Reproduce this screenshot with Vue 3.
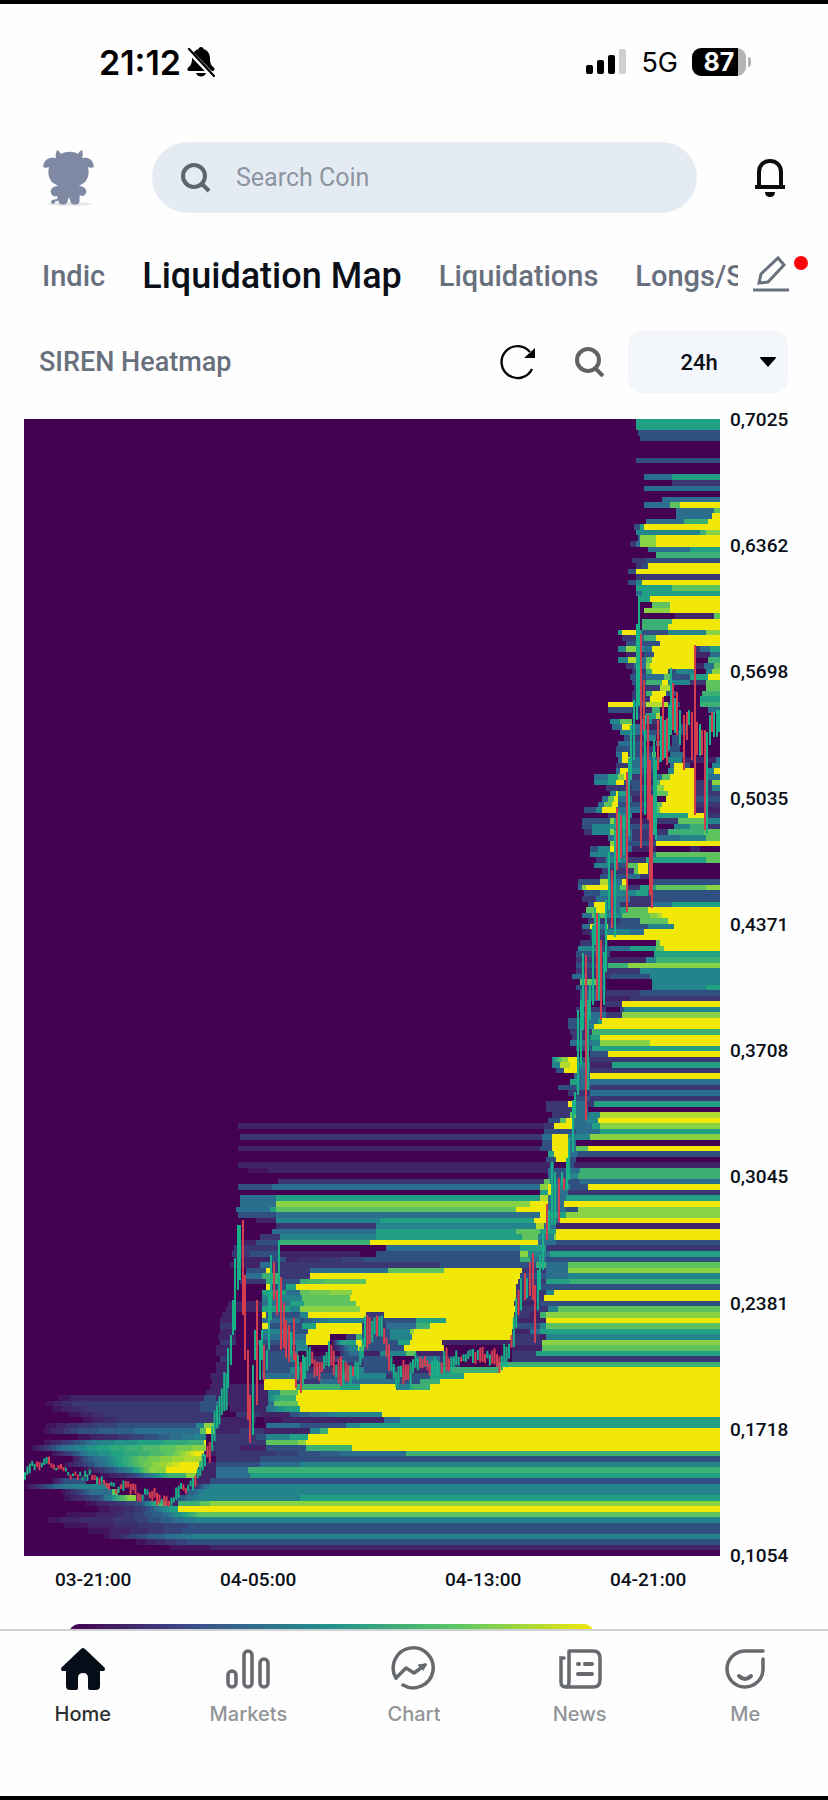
<script setup>
import { ref } from 'vue'

const tabs = ['Indic', 'Liquidation Map', 'Liquidations', 'Longs/Shorts']
const activeTab = ref('Liquidation Map')
const range = ref('24h')
const query = ref('')
const prices = ['0,7025', '0,6362', '0,5698', '0,5035', '0,4371', '0,3708', '0,3045', '0,2381', '0,1718', '0,1054']
const times = ['03-21:00', '04-05:00', '04-13:00', '04-21:00']

/* Colour ramp of the heatmap, from low to high liquidity. */
const ramp = [
  [68, 1, 84], [64, 36, 103], [59, 54, 116], [48, 80, 130], [43, 110, 142], [36, 132, 140],
  [34, 160, 132], [60, 176, 116], [94, 194, 94], [136, 210, 68], [178, 218, 46], [242, 232, 8],
]

/*
 * One line per price level, top to bottom. "x:c" starts level c at x,
 * "x~c" fades from the previous stop to level c at x. Levels are hex digits.
 */
const levels = `
636:6
636:6
637:3
640:3



636:3


643:4 671:6
671:2
643:4

662:4
643:4 670:8 679:b
675:4 714:8
675:4 712:b
645:4 683:7 707:b
633:3 640:6 644:b
636:5 700:7 706:9
637:4 640:9 656:b
630:2 635:4 640:9 655:b
647:4 690:6
656:7
631:2 645:3
635:2 641:3 647:b
628:3 636:b
636:2
628:3 636:5 642:b
636:6 671:8
636:4 642:6
638:6 650:b
640:0 652:8 669:b
643:9 669:b
641:0 674:1 714:8
642:7 671:b
642:7 668:b
618:6 621:b 636:6 642:3 667:5 705:9
622:2 637:4 643:7 656:b
626:3 659:b
617:5 625:9 635:5 643:4 651:b 695:2 700:4 710:6
626:1 643:3 654:b 695:1 709:4
617:5 628:a 636:4 645:8 651:b 695:0 707:7
626:2 634:4 645:9 650:b 695:1 704:4 714:8
632:2 645:7 652:b 668:3 675:5 695:0 705:5 712:9
630:3 645:4 664:8 670:3 690:6 707:b
632:3 645:7 662:b 668:5 690:2 705:8
634:2 660:a 670:0 705:8
632:2 645:7 652:b 665:3 675:0 702:7
632:2 650:b 664:0 700:6
608:b 633:4 645:a 668:3 680:0 700:7
608:3 632:1 652:7 660:0 708:4
632:2 645:6 655:a 660:0
610:5 620:8 632:0 640:5 652:2 660:0
612:4 622:b 631:4 645:1 660:0 680:3 688:0
620:5 632:4 650:3 665:0 675:3 685:0
624:3 632:2 645:5 655:0 671:3 680:0
617:4 630:3 645:0 655:5 660:0 671:3 679:0
616:3 640:2 655:0 668:3 680:0
616:4 622:b 628:3 652:8 655:0 670:4 684:0
618:4 622:b 630:4 648:4 660:0 668:5 682:1 715:4
615:2 630:4 655:0 669:4 674:b 683:3 690:0 712:5
616:4 620:b 628:5 640:3 655:0 667:5 673:b 693:0 708:5 714:b
594:4 608:6 618:9 623:b 628:5 632:2 655:4 661:8 669:b 693:0 708:4
594:5 608:6 616:b 624:3 640:1 656:7 660:b 693:2 712:9
605:2 624:2 632:3 656:9 663:b 693:2 712:5
609:5 615:b 618:6 630:2 655:8 668:b 693:2
602:4 608:8 614:b 618:4 632:1 655:0 666:b 693:3
598:4 604:8 612:b 617:3 655:8 661:b 693:2
584:3 595:5 602:b 616:4 628:4 640:2 655:8 660:b 693:1
608:2 616:5 632:0 650:6 688:b 703:2
582:3 609:9 614:6 628:1 655:2 678:8 703:5
582:3 592:5 609:6 628:3 655:0 673:5 690:7 703:2
584:2 592:5 609:9 613:4 632:2 667:7 704:8
608:4 632:2 656:4 680:5 705:8
609:9 614:4 628:3 655:b
590:3 597:5 609:b 613:4 632:1 655:0 690:1 700:0
590:5 609:4 628:0 652:5 656:8
595:2 605:5 628:2 645:6 706:8
594:5 610:3 628:8 637:b 647:3 652:0
602:2 633:8 638:b 648:3 652:0
600:3 625:9 628:4 640:2 652:0
577:3 600:a 607:4 622:b 625:0 652:3
577:4 581:9 585:b 607:5 620:8 625:2 640:6 655:8 706:9
584:3 600:5 635:6 648:3
582:2 595:4 630:2 652:3
587:3 594:b 605:4 620:2 652:4 671:6
586:8 595:b 606:4 620:6 628:8 648:b
582:4 592:8 606:5 622:8 650:9 658:a 662:b
587:2 620:3 640:8 668:b
582:4 589:b 598:4 605:9 608:3 648:5 674:b
582:1 590:3 606:5 630:4 644:b
590:2 606:b
580:2 608:0 656:8 659:b
578:5 595:3 610:4 630:6 656:8 663:b
576:3 610:0 654:6
575:2 608:1 645:5 655:7
576:3 608:7 628:9
575:2 608:2 640:5
572:4 585:2 610:3 650:5
580:8 600:2 606:0 652:5
576:3 606:0 652:5 706:6
580:4 600:2 640:3
580:4 600:1 630:2
582:5 590:0 603:2 622:b
575:2 605:0 620:3 623:5
580:4 605:2 622:9
568:3 585:4 598:6 602:b
568:3 585:5 594:b
570:2 592:7
572:2 590:6 600:b
570:4 592:5 600:9 650:b
575:3 592:6
590:3 608:b
552:5 562~9 568:b 578:3 590:2
552:5 560:a 570:b 578:5 590:1 611:6
555:3 563:b 578:4 590:2
573:4 589:b
570:6 578:4
558:3 575:4 590:2
568:2 590:4
575:3 590:2
546:2 568:b 573:4 585:2 594:6
546:2 575:4 588:0
552:2 570:8 575:4 590:5 600:a
548:3 560:8 565:b 573:4 585:5 597:b
238:1 544:2 553:b 573:4 592:6 600:9
544:3 575:4 600:6
239:2 541:4 552:b 568:5 590:9
541:3 552:b 568:4 575:0
238:1 540:3 552:b 568:4 575:8 588:b
548:6 553:b 568:4 577:3
546:3 555:b 568:3 575:0
237:1 550:4 553:0 568:3 573:1
237:0 278~1 548:4 553:3 568:4 580:7
548:4 553:3 568:5 578:7
278:2 543:8 550:4 565:3 580:4
238:3 272:4 540:9 548:b 552:5 570:3 587:b
270:0 540:6 548:b 552:4 568:2
240:4 275:6 540:a 548:4 565:6
240:4 275:9 530:b 548:4 564:b
235:4 270:6 276:8 516:b 548:4 565:3 577:9
238:3 275:4 540:b 546:6 565:9
239:0 255:1 275:5 380:6 533:b 545:4 560:b
239:0 275:2 375:5 535:a 543:4 556:1
239:0 272:4 375:6 515:8 540:6 555:b
239:0 260:2 280:5 375:6 522:8 538:5 553:9 556:b
239:1 255:3 280:7 370:b 538:4 555:3
233:2 280:0 370:0 385:4 520:6 545:2
232:2 250:3 280:1 360:0 375:3 520:9 528:5 545:4 550:6
236:1 270:3 285:1 375~3 520:7 530:4 545:3
230:1 260:4 270:2 440:3 535:7 545:4 568:8
245:3 265:b 271:2 310:4 388:8 443:b 522:2 545:4 568:9
245:4 262:7 280:2 310:b 520:3 545:4 568:5
240:2 265:7 282:3 300:7 330~8 365:b 517:2 545:6 570:7
265:b 270:3 285:6 295:b 516:2 540:3
262:6 285:4 300:8 340~9 352:b 516:2 545:5 554:b
262:5 285:5 302:8 350:b 515:2 543:b
228:1 262:4 290:6 303:8 355:b 514:1 540:3
226:1 262:6 290:5 300:9 360:b 515:2 548:5 557:8
222:1 235:0 262:b 266:3 300:5 308:b 365:2 383:b 514:2 530:1 540:7 546:9
220:1 235:0 262:4 300:3 330~5 365:2 384:3 415:6 445:b 513:1 546:b
220:2 235:0 262:b 268:3 302:6 316:b 362:2 385:4 415:7 430:b 513:3 540:5 546:8
220:1 235:0 262:5 290:3 308:b 362:3 390:5 410:9 414:b 512:1 530:4 540:6
218:1 235:0 262:4 290:4 305:b 330:0 345:2 355:7 362:3 390:5 412:b 512:2 540:1 545:5
220:2 235:0 255:3 292:5 305:b 330:0 340~6 355:b 362:3 398:6 410:b 442:1 512:2 541:9
215:1 232:0 262:2 295:5 308:0 330:0 350~5 358:b 363:3 403:b 443:0 512:1 541:8
215:1 232:0 262:3 290:5 298:0 340:2 350~4 363:1 380:5 405:8 415:1 443:0 512:2 535:6
220:2 232:0 262:3 290:5 298:0 345~3 390:0 415:4 440:2 455:0 512:2
215:1 230:0 262:3 298:2 310:0 345:2 363:3 392:0 420:5 440:2 460:0 495:7
215:1 230:0 262:3 290:5 305:2 345:5 363:3 395:1 430:5 450:7 500:b
210:1 230:0 262:4 298:3 340:5 385:2 400:3 430:6 463:b
212:1 230:0 264:b 296:2 320:4 395:3 420:7 440:b
210:1 230:1 264:b 296:7 340:6 360:b 395:5 410:7 430:b
205:1 230:1 268:5 280:8 297:b
50:0 75~1 200:1 203:3 215:1 228:1 268:5 280~7 295:b
40:0 75~2 200:3 215:4 220:1 268:4 273:8 297:b
45:0 90~2 200:3 217:0 230:1 265:4 285~6 300:b
60:0 110~2 215:0 235:2 260:1 290:3 340~5 382:b
75:0 120~2 214:1 255:0 290~1 370:1 383:4 400:6
40:0 80~2 130~3 195:5 203:9 213:3 220:1 254:0 265:4 300:3 345:5 360:6
40:0 80~3 150~4 200:8 206:b 213:1 240:2 263:1 310:5 320:7 327:b
70:0 150~3 200~5 205:0 213:2 255:3 265:5 290:6 307:b
40:0 100~5 200~7 203:b 206:0 213:2 265:8 297:9 305:b
30:0 60~4 100~6 200~9 205:0 212:2 240:1 265:3 305:7 352:b
50:0 90~5 170~8 195~b 204:1 215:2 265:2 350~4 405:7
70:0 85~3 140~8 190~a 202:0 215:2 260:3
60:0 100~4 140~8 182~b 201:1 215:3 260:4 300:5
80:0 130~5 150~9 165:b 198:1 215:4 248:7
95:0 130~2 170~7 185:9 195:1 215:4 250:6
50:0 65~3 85:0 190:1 210:3
24:0 55~4 80~5 110:0 190:1 210~5
60:0 90~4 112:8 117:0 178:0 185:3 205~5
60:0 100~3 128~9 135:1 150:0 175:3 200~5 300:6
80:0 140~3 160~8 166:1 178:7 200:8 210:9
90:0 140~2 170~6 178:b
50:0 110~1 165~4 200~8
40:0 65~1 130~2 200~5
50:0 100~1 200~3
75:0 120~1 190~3
100:0 140~3 200~5
130:0 190~3
150:0 230~1

`.slice(1).split('\n').slice(0, 205)

const ROW = 1137 / 205

function parseRow(line) {
  return (line.match(/\d+[:~][0-9ab]/g) || []).map((stop) => ({
    x: Math.max(0, parseInt(stop, 10) - 24),
    fade: stop.includes('~'),
    c: parseInt(stop.slice(-1), 16),
  }))
}

function levelAt(stops, x) {
  let value = 0
  for (let i = 0; i < stops.length; i++) {
    const s = stops[i]
    if (x >= s.x) {
      value = s.c
      continue
    }
    if (s.fade && i > 0) {
      const p = stops[i - 1]
      value = p.c + ((s.c - p.c) * (x - p.x)) / (s.x - p.x)
    }
    break
  }
  return Math.round(value * 2)
}

function heatPaths() {
  const paths = {}
  levels.forEach((line, r) => {
    const stops = parseRow(line)
    let start = 0
    let current = levelAt(stops, 0)
    for (let x = 2; x <= 696; x += 2) {
      const next = x === 696 ? -1 : levelAt(stops, x)
      if (next === current) continue
      if (current > 0) {
        const y = (r * ROW).toFixed(2)
        paths[current] = (paths[current] || '') + `M${start} ${y}h${x - start}v${ROW.toFixed(2)}h${start - x}z`
      }
      start = x
      current = next
    }
  })
  return Object.entries(paths).map(([half, d]) => {
    const a = ramp[Math.floor(half / 2)]
    const b = ramp[Math.ceil(half / 2)]
    return { d, fill: `rgb(${a.map((v, i) => Math.round((v + b[i]) / 2)).join(',')})` }
  })
}

/* Quiet stretches of the price line: x, middle of the candle, typical height. */
const quiet = [
  [[25, 1474, 7], [30, 1467, 8], [36, 1463, 8], [42, 1465, 8], [47, 1460, 8], [52, 1464, 5], [60, 1468, 4], [70, 1474, 4], [80, 1477, 5], [90, 1475, 6], [98, 1481, 8], [108, 1486, 6], [118, 1489, 7], [125, 1486, 9], [132, 1489, 9], [140, 1496, 8], [148, 1492, 8], [157, 1497, 10], [165, 1500, 10], [171, 1504, 8], [175, 1501, 6], [178, 1490, 16], [181, 1484, 10], [187, 1490, 6], [193, 1484, 10], [200, 1470, 14], [206, 1456, 18], [210, 1449, 22], [214, 1432, 26], [218, 1412, 26], [222, 1398, 30], [227, 1388, 34]],
  [[305, 1366, 20], [310, 1355, 16], [315, 1366, 22], [320, 1370, 18], [326, 1360, 16], [331, 1352, 26], [336, 1368, 22], [342, 1374, 24], [350, 1372, 16], [358, 1370, 16], [362, 1350, 26], [366, 1328, 26], [370, 1334, 30], [375, 1326, 22], [381, 1326, 22], [386, 1345, 24], [390, 1362, 24], [395, 1378, 24], [400, 1372, 18], [410, 1376, 24], [416, 1362, 12], [422, 1360, 12], [430, 1368, 16], [440, 1368, 16], [446, 1358, 24], [451, 1368, 16], [458, 1358, 10], [466, 1356, 9], [480, 1356, 14], [490, 1357, 12], [500, 1362, 16], [510, 1350, 20], [514, 1328, 24], [518, 1306, 26], [523, 1285, 26]],
]

/* Tall candles, one by one: x, high, low, direction. */
const tall = `228 1348 1388 u,231 1335 1365 u,233 1300 1335 u,235 1258 1330 u,238 1225 1290 u,240 1225 1280 u,243 1220 1315 d,245 1275 1360 d,248 1350 1420 d,250 1395 1443 d,253 1365 1435 u,255 1330 1360 u,257 1300 1405 d,260 1340 1380 u,262 1330 1360 u,264 1345 1380 d,267 1350 1370 u,269 1290 1350 u,271 1255 1320 u,274 1262 1300 d,277 1290 1315 d,279 1240 1310 u,281 1277 1350 d,284 1303 1348 d,286 1320 1358 d,289 1325 1362 d,291 1332 1355 u,294 1318 1360 d,296 1353 1388 d,298 1355 1380 u,301 1362 1393 d,303 1355 1385 u,
525 1273 1300 d,527 1278 1298 u,530 1262 1296 d,533 1253 1300 d,535 1285 1343 d,538 1270 1310 u,540 1255 1290 u,543 1234 1270 u,547 1204 1240 d,549 1210 1230 u,552 1162 1225 u,555 1172 1225 u,559 1178 1222 d,562 1172 1185 u,564 1178 1190 d,567 1158 1190 u,569 1138 1180 u,573 1100 1152 u,575 1092 1115 u,578 1010 1095 u,581 1000 1065 u,583 953 1030 u,586 955 1120 d,588 1000 1090 u,590 985 1020 u,593 925 1005 u,595 908 945 u,597 913 1000 d,599 913 1000 u,601 940 1020 d,604 952 1005 u,606 900 972 u,609 852 910 u,612 870 928 d,615 830 937 u,617 808 870 d,619 812 862 u,621 815 858 d,624 815 855 u,627 772 912 d,629 758 836 u,631 725 780 u,634 700 760 u,637 624 720 u,639 595 705 u,641 634 848 d,644 680 730 d,645 715 815 u,648 715 820 d,650 760 895 d,652 795 908 d,654 740 835 u,656 760 840 u,658 720 770 d,661 716 762 u,
663 697 760 d,665 720 758 u,667 718 765 d,669 705 750 u,671 668 735 u,673 683 730 d,675 698 733 u,677 692 735 d,680 710 745 u,684 715 770 d,687 712 740 d,689 710 725 u,692 712 760 d,695 645 815 d,697 722 755 d,700 724 756 u,702 730 755 d,705 730 830 d,707 732 834 u,710 715 745 u,712 712 732 d,714 712 737 u,717 710 737 u,719 710 732 u`

function quietCandles(points) {
  const out = []
  let seed = 7
  for (let x = points[0][0]; x <= points[points.length - 1][0]; x += 2.4) {
    const i = Math.max(1, points.findIndex((p) => p[0] >= x))
    const [x0, y0, h0] = points[i - 1]
    const [x1, y1, h1] = points[i]
    const t = (x - x0) / (x1 - x0)
    seed = (seed * 73 + 41) % 101
    const mid = y0 + (y1 - y0) * t + (seed % 7) - 3
    const h = (h0 + (h1 - h0) * t) * (0.6 + (seed % 10) / 14)
    out.push({ x, top: mid - h / 2, bottom: mid + h / 2, up: seed % 5 === 0 ? y1 > y0 : y1 <= y0 })
  }
  return out
}

const candles = [
  ...quiet.flatMap(quietCandles),
  ...tall.split(',').map((entry) => {
    const [x, top, bottom, dir] = entry.trim().split(' ')
    return { x: +x, top: +top, bottom: +bottom, up: dir === 'u' }
  }),
]
const candlePath = (up) =>
  candles
    .filter((c) => c.up === up)
    .map((c) => `M${(c.x - 24).toFixed(1)} ${(c.top - 419).toFixed(1)}V${(c.bottom - 419).toFixed(1)}`)
    .join('')
const heat = heatPaths()
const rising = candlePath(true)
const falling = candlePath(false)
</script>

<template>
  <div class="app">
    <div class="status">
      <div class="clock">
        <span>21:12</span>
        <svg width="28" height="30" viewBox="0 0 28 30" aria-hidden="true">
          <path d="M14 0c-1.500 0-2.500 1-2.700 2.200C7 3.500 5 7 5 11.500c0 5-1.300 7-3.800 9-1.200 1-1 3.500 1 3.500h23.600c2 0 2.200-2.500 1-3.500-2.500-2-3.800-4-3.800-9 0-4.500-2-8-6.300-9.300C16.500 1 15.500 0 14 0zM9 26h10c-.6 2.300-2.500 3.500-5 3.500S9.600 28.300 9 26z" />
          <path d="M1 3l25 26" stroke="#fff" stroke-width="5" />
          <path d="M2 2l25 27" stroke="#000" stroke-width="2.200" stroke-linecap="round" />
        </svg>
      </div>
      <div class="radio">
        <svg width="41" height="26" viewBox="0 0 41 26" aria-hidden="true">
          <rect x="0" y="16" width="7" height="9" rx="2" />
          <rect x="11" y="11" width="7" height="14" rx="2" />
          <rect x="22" y="6" width="7" height="19" rx="2" />
          <rect x="33" y="0" width="7" height="25" rx="2" fill="#cfcfcf" />
        </svg>
        <span class="network">5G</span>
        <span class="battery"><b>87</b></span>
      </div>
    </div>

    <header class="top">
      <svg class="avatar" width="52" height="56" viewBox="0 0 52 56" aria-hidden="true">
        <ellipse cx="27" cy="54" rx="22" ry="2" fill="#e6e8ec" />
        <path fill="#8089a3" d="M14 0c3 1 3 3 4 4 5-3 13-3 17 0 1-1 1-3 4-4 1 3 1 5 0 8 6-1 11 1 12 9-2 1-4 1-6 0 2 8-1 15-6 17-1 1-2 1-3 2 5 0 8 3 7 7-1 3-4 4-6 2-1 3 0 6-1 8-2 2-6 2-8 0l-2-6-2 6c-2 2-6 2-8 0l-2-7c-3 1-5 0-6-3-1-4 2-7 7-7-1-1-2-1-3-2-5-2-8-9-6-17-2 1-4 1-6 0C1 9 6 7 13 8c-1-3 0-5 1-8z" />
        <path d="M17 47l-3 3-5 1" stroke="#8089a3" stroke-width="2" fill="none" />
        <circle cx="10" cy="52" r="2" fill="#8089a3" />
      </svg>
      <label class="search">
        <svg width="32" height="32" viewBox="0 0 32 32" fill="none" stroke="#5c656f" stroke-width="4" aria-hidden="true">
          <circle cx="14" cy="14" r="11" />
          <path d="M22 22l7 7" />
        </svg>
        <input v-model="query" type="search" placeholder="Search Coin" aria-label="Search Coin" />
      </label>
      <button class="plain" aria-label="Notifications">
        <svg width="30" height="38" viewBox="0 0 30 38" fill="none" aria-hidden="true">
          <path d="M4 27V13C4 6 9 2 15 2s11 4 11 11v14M0 28h30" stroke="#0b0b0d" stroke-width="4" />
          <path d="M10 33h10c0 3-2 5-5 5s-5-2-5-5z" fill="#0b0b0d" />
        </svg>
      </button>
    </header>

    <div class="tabbar">
      <nav class="tabs">
        <button v-for="t in tabs" :key="t" :class="{ active: t === activeTab }" @click="activeTab = t">{{ t }}</button>
      </nav>
      <button class="plain edit" aria-label="Edit tabs">
        <svg width="36" height="38" viewBox="0 0 36 38" fill="none" stroke="#68707d" stroke-width="3" aria-hidden="true">
          <path d="M6 28l2-9L25 3l6 7-16 17z" />
          <path d="M0 35h36" />
        </svg>
        <i class="dot"></i>
      </button>
    </div>

    <main>
      <div class="toolbar">
        <h1>SIREN Heatmap</h1>
        <button class="plain" aria-label="Refresh">
          <svg width="36" height="36" viewBox="0 0 36 36" fill="none" aria-hidden="true">
            <path d="M32 25A16 16 0 1 1 30 8" stroke="#050505" stroke-width="2.400" />
            <path d="M35 4v10H24z" fill="#050505" />
          </svg>
        </button>
        <button class="plain" aria-label="Search symbol">
          <svg width="30" height="30" viewBox="0 0 30 30" fill="none" stroke="#606366" stroke-width="4" aria-hidden="true">
            <circle cx="14" cy="13" r="11" />
            <path d="M21 21l8 8" />
          </svg>
        </button>
        <div class="range">
          <select v-model="range" aria-label="Time range">
            <option>12h</option>
            <option>24h</option>
            <option>48h</option>
          </select>
          <svg width="16" height="10" viewBox="0 0 16 10" aria-hidden="true"><path d="M1 0h14q1 0 1 1L8 10 0 1q0-1 1-1z" /></svg>
        </div>
      </div>

      <div class="chart">
        <svg class="heat" viewBox="0 0 696 1137" role="img" aria-label="Liquidation heatmap">
          <rect width="696" height="1137" fill="#440154" />
          <g shape-rendering="crispEdges">
            <path v-for="p in heat" :key="p.fill" :d="p.d" :fill="p.fill" />
          </g>
          <path :d="rising" stroke="#17b087" stroke-width="2" />
          <path :d="falling" stroke="#d23d50" stroke-width="2" />
        </svg>
        <div class="prices"><span v-for="p in prices" :key="p">{{ p }}</span></div>
        <div class="times"><span v-for="t in times" :key="t">{{ t }}</span></div>
      </div>
      <div class="legend"></div>
    </main>

    <nav class="bottom">
      <a href="#home" class="current">
        <svg width="48" height="48" viewBox="0 0 48 48" aria-hidden="true">
          <path fill="#050d18" d="M22 4q2-2 4 0l19 18q2 2 0 4h-4v15q0 4-4 4h-6q-2 0-2-2V33q0-5-5-5t-5 5v10q0 2-2 2h-6q-4 0-4-4V26H3q-2-2 0-4z" />
        </svg>
        Home
      </a>
      <a href="#markets">
        <svg width="48" height="48" viewBox="0 0 48 48" fill="none" stroke="#66696d" stroke-width="3.500" aria-hidden="true">
          <rect x="4" y="26" width="8" height="16" rx="4" />
          <rect x="20" y="6" width="8" height="36" rx="4" />
          <rect x="36" y="14" width="8" height="28" rx="4" />
        </svg>
        Markets
      </a>
      <a href="#chart">
        <svg width="48" height="48" viewBox="0 0 48 48" fill="none" stroke="#66696d" stroke-width="3.500" stroke-linecap="round" aria-hidden="true">
          <path d="M6 33A20 20 0 1 1 13 40" />
          <path d="M6 33l10-10 8 5 11-8" stroke-linejoin="round" />
          <path d="M36 19l-8 1 5 5z" fill="#66696d" stroke-width="1" />
        </svg>
        Chart
      </a>
      <a href="#news">
        <svg width="48" height="48" viewBox="0 0 48 48" fill="none" stroke="#66696d" stroke-width="3.500" stroke-linecap="round" aria-hidden="true">
          <path d="M13 6h24q7 0 7 7v22q0 7-7 7H10q-5 0-5-5V13h3M13 6v31q0 5-4 5" />
          <path d="M22 19h1M29 19h7M22 29h14" stroke-width="4" />
        </svg>
        News
      </a>
      <a href="#me">
        <svg width="48" height="48" viewBox="0 0 48 48" fill="none" stroke="#66696d" stroke-width="3.500" stroke-linecap="round" aria-hidden="true">
          <path d="M42 6H24A18 18 0 1 0 42 25V14" />
          <path d="M18 31q6 6 12 0" stroke-width="4" />
        </svg>
        Me
      </a>
    </nav>
  </div>
</template>

<style>
body {
  margin: 0;
  background: #fff;
}
</style>

<style scoped>
.app {
  box-sizing: border-box;
  display: flex;
  flex-direction: column;
  height: 100vh;
  overflow: hidden;
  border-top: 4px solid #000;
  border-bottom: 4px solid #000;
  background: #fefefe;
  color: #0a0f18;
  font-family: Roboto, "Liberation Sans", sans-serif;
}
button,
input,
select {
  font: inherit;
  color: inherit;
  border: 0;
  background: none;
  padding: 0;
  margin: 0;
}
svg {
  display: block;
  flex: none;
}
.plain {
  position: relative;
  flex: none;
}
.status {
  display: flex;
  justify-content: space-between;
  align-items: center;
  height: 40px;
  padding: 38px 82px 0 99px;
  font-family: Inter, sans-serif;
  color: #000;
}
.clock,
.radio {
  display: flex;
  align-items: center;
}
.clock {
  gap: 6px;
  font-size: 34px;
  font-weight: 600;
}
.radio {
  gap: 14px;
}
.network {
  font-size: 27px;
}
.battery {
  position: relative;
  display: block;
  box-sizing: border-box;
  width: 54px;
  height: 28px;
  border-radius: 9px;
  background: linear-gradient(90deg, #000 46px, #b4b4b4 46px);
  color: #fff;
  font-size: 25px;
  line-height: 28px;
  text-align: center;
}
.battery b {
  font-weight: 700;
}
.battery::after {
  content: "";
  position: absolute;
  right: -5px;
  top: 9px;
  width: 3px;
  height: 10px;
  border-radius: 0 4px 4px 0;
  background: #b4b4b4;
}
.top {
  display: flex;
  align-items: center;
  padding: 60px 43px 0 43px;
}
.search {
  display: flex;
  flex: 1;
  align-items: center;
  gap: 24px;
  height: 71px;
  margin: 0 58px 0 57px;
  padding: 0 28px;
  border-radius: 36px;
  background: #e5ebf3;
}
.search input {
  flex: 1;
  min-width: 0;
  outline: 0;
  font-size: 25px;
  appearance: none;
}
.search input::placeholder {
  color: #8c95a1;
  opacity: 1;
}
.tabbar {
  display: flex;
  align-items: center;
  gap: 15px;
  height: 64px;
  margin-top: 31px;
  padding: 0 39px 0 42px;
}
.tabs {
  display: flex;
  flex: 1;
  align-items: center;
  gap: 37px;
  min-width: 0;
  overflow: hidden;
  white-space: nowrap;
}
.tabs button {
  flex: none;
  color: #68707d;
  font-size: 29px;
  font-weight: 500;
}
.tabs .active {
  color: #0a0f18;
  font-size: 36px;
}
.edit {
  margin-bottom: 4px;
}
.dot {
  position: absolute;
  right: -19px;
  top: 1px;
  width: 14px;
  height: 14px;
  border-radius: 50%;
  background: #f9040c;
}
main {
  flex: 1;
  min-height: 0;
  overflow: hidden;
}
.toolbar {
  display: flex;
  align-items: center;
  margin: 23px 40px 26px 39px;
}
h1 {
  flex: 1;
  margin: 0;
  color: #68707d;
  font-size: 27px;
  font-weight: 500;
}
.toolbar .plain {
  margin-right: 38px;
}
.toolbar .plain + .plain {
  margin-right: 24px;
}
.range {
  position: relative;
  width: 160px;
  height: 62px;
}
.range select {
  width: 100%;
  height: 100%;
  padding-right: 18px;
  border-radius: 14px;
  background: #f3f7fb;
  font-size: 22px;
  font-weight: 500;
  text-align: center;
  text-align-last: center;
  appearance: none;
}
.range svg {
  position: absolute;
  right: 12px;
  top: 26px;
  pointer-events: none;
}
.chart {
  display: grid;
  grid-template-columns: 1fr 98px;
  column-gap: 10px;
  padding-left: 24px;
  font-size: 19px;
  font-weight: 500;
  line-height: 24px;
}
.heat {
  width: 100%;
  height: auto;
}
.prices {
  display: flex;
  flex-direction: column;
  justify-content: space-between;
  margin: -11px 0 -12px;
}
.times {
  display: grid;
  grid-template-columns: 165fr 225fr 165fr 110fr;
  padding: 12px 0 0 31px;
}
.legend {
  height: 28px;
  margin: 32px 234px 0 69px;
  border-radius: 10px;
  background: linear-gradient(90deg, #440154, #3b528b 25%, #21918c 50%, #5ec962 75%, #f2e809);
}
.bottom {
  display: grid;
  grid-template-columns: repeat(5, 1fr);
  flex: none;
  box-sizing: border-box;
  height: 167px;
  padding-top: 14px;
  border-top: 2px solid #cfd0d2;
  font-family: Inter, sans-serif;
}
.bottom a {
  display: flex;
  flex-direction: column;
  align-items: center;
  gap: 9px;
  color: #929497;
  font-size: 20px;
  font-weight: 500;
  line-height: 24px;
  text-decoration: none;
}
.bottom .current {
  color: #2c2f33;
}
</style>
